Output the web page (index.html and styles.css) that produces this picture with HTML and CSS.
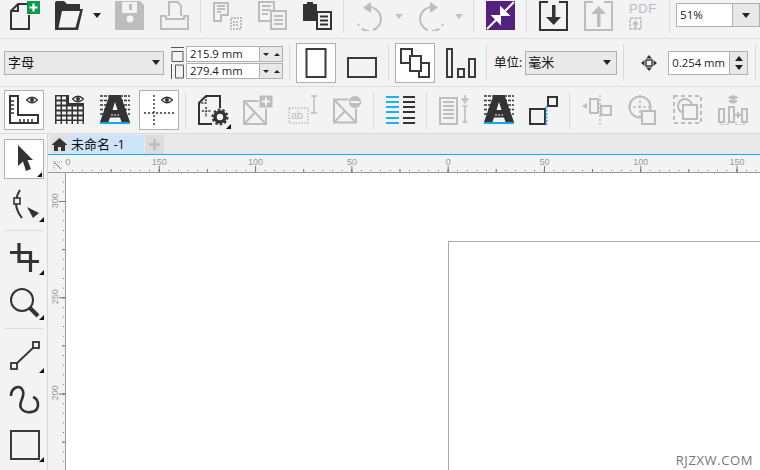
FILE: index.html
```html
<!DOCTYPE html>
<html lang="zh">
<head>
<meta charset="utf-8">
<title>未命名 -1</title>
<link rel="stylesheet" href="styles.css">
</head>
<body>
<svg class="defs" width="0" height="0">
  <symbol id="eye" viewBox="0 0 12 8"><path d="M.5 4Q6-1.500 11.500 4Q6 9.500 .5 4Z" fill="#fff" stroke="currentColor" stroke-width="1.200"/><circle cx="6" cy="4" r="2" fill="currentColor"/></symbol>
  <symbol id="bigA" viewBox="0 0 30 30">
    <path d="M0 1H30M0 5.500H30M0 10H30M0 14.500H30M0 19H30" stroke="currentColor" stroke-width="1.500" stroke-dasharray="3 1"/>
    <path d="M9.500 0H20.500L30 27H21.500L20 22.500H10L8.500 27H0Z" fill="currentColor"/>
    <path d="M12.500 15H17.500L15 7Z" fill="#f3f3f3"/>
    <path d="M11 20H13M14 20H16M17 20H19" stroke="#f3f3f3" stroke-width="1.200"/>
    <rect y="27" width="30" height="2" fill="#17a5e6"/>
  </symbol>
  <symbol id="imgbox" viewBox="0 0 24 25"><path d="M1 1H23V24H1ZM1 1L23 24M1 24L12 12.500" fill="none" stroke="currentColor" stroke-width="2"/></symbol>
</svg>

<header class="bars">
  <div class="row r1">
    <svg class="ic first" viewBox="0 0 30 30"><path d="M17 3H8L1 10V28H19V14M8 3V10H1" fill="none" stroke="#333" stroke-width="2"/><rect x="17" width="13" height="13" fill="#0c9b4c"/><path d="M23.500 2.500V10.500M19.500 6.500H27.500" stroke="#fff" stroke-width="2.200"/></svg>
    <svg class="ic" viewBox="0 0 30 30"><path d="M0 2Q0 0 2 0H9L12 3H25V8H28L23 29H0Z" fill="#333"/><path d="M7 10H25L20.500 26.500H3.500Z" fill="#f3f3f3"/></svg>
    <i class="drop dark m8"></i>
    <svg class="ic off m14" viewBox="0 0 30 30"><path d="M0 0H25L29 4V29H0Z" fill="currentColor"/><rect x="7" y="1" width="15" height="11" fill="#f3f3f3"/><rect x="14" y="3" width="3" height="6" fill="currentColor"/><circle cx="15" cy="18" r="3.500" fill="#f3f3f3"/></svg>
    <svg class="ic off" viewBox="0 0 30 30"><path d="M9 15V1H18L21 5V15M1 15H6V18H24V15H28V28H1Z" fill="none" stroke="currentColor" stroke-width="2"/></svg>
    <span class="sep"></span>
    <svg class="ic off" viewBox="0 0 30 30"><path d="M1 2H15V14H8V20H1ZM4 5H12M4 8H12M4 11H8" fill="none" stroke="currentColor" stroke-width="2"/><path d="M18 17H28V28H18ZM20 21H26M20 24H26" fill="none" stroke="currentColor" stroke-width="2" stroke-dasharray="2 1"/></svg>
    <svg class="ic off" viewBox="0 0 30 30"><path d="M1 1H16V20H1ZM4 5H13M4 9H13M4 13H10" fill="none" stroke="currentColor" stroke-width="2"/><path d="M13 10H28V28H13ZM16 15H25M16 19H25M16 23H25" fill="#f3f3f3" stroke="currentColor" stroke-width="2"/></svg>
    <svg class="ic" viewBox="0 0 30 30"><path d="M0 3H4V1H10V3H14V20H0Z" fill="#333"/><path d="M14 11H28V28H14Z" fill="#f3f3f3" stroke="#333" stroke-width="2"/><path d="M17 15.500H25M17 19.500H25M17 23.500H25" stroke="#333" stroke-width="2"/></svg>
    <span class="sep"></span>
    <svg class="ic off" viewBox="0 0 30 30"><path d="M12 6A12 12 0 1 1 2 23" fill="none" stroke="currentColor" stroke-width="2" stroke-dasharray="34 4 8 4 4 3"/><path d="M15 1L7 6.500L15 12Z" fill="currentColor"/></svg>
    <i class="drop pale m9"></i>
    <svg class="ic off m14" viewBox="0 0 30 30"><path d="M16 6A12 12 0 1 0 26 23" fill="none" stroke="currentColor" stroke-width="2" stroke-dasharray="34 4 8 4 4 3"/><path d="M13 1L21 6.500L13 12Z" fill="currentColor"/></svg>
    <i class="drop pale m8"></i>
    <span class="sep"></span>
    <svg class="ic" viewBox="0 0 30 30"><rect width="29" height="29" fill="#54227e"/><path d="M28 1L18 11M15 14H22L15 7ZM1 28L11 18M14 15H7L14 22Z" stroke="#fff" stroke-width="2" fill="#fff"/></svg>
    <span class="sep"></span>
    <svg class="ic" viewBox="0 0 30 30"><path d="M9 1H1V29H28V1H20" fill="none" stroke="#333" stroke-width="2"/><path d="M13 4H16.500V16H22L14.700 24L7 16H13Z" fill="#333"/></svg>
    <svg class="ic off" viewBox="0 0 30 30"><path d="M9 1H1V29H28V1H20" fill="none" stroke="currentColor" stroke-width="2"/><path d="M13 26H16.500V13H22L14.700 5L7 13H13Z" fill="currentColor"/></svg>
    <div class="ic pdf off"><span class="pdf-t">PDF</span><svg class="pdf-i" viewBox="0 0 12 12"><path d="M1 1H11V11H1Z" fill="none" stroke="currentColor" stroke-width="1.500" stroke-dasharray="3 1"/><path d="M5 10V7H3L6 3L9 7H7V10Z" fill="currentColor"/></svg></div>
    <span class="sep"></span>
    <div class="combo zoom"><span class="val">51%</span><span class="cbtn"><i class="drop dark"></i></span></div>
  </div>

  <div class="row r2">
    <div class="select font"><span>字母</span><i class="drop dark"></i></div>
    <div class="dims">
      <svg class="dim-i" viewBox="0 0 13 15"><path d="M0 .5H13M1 4.500H12V14.500H1Z" fill="none" stroke="#555"/></svg>
      <svg class="dim-i" viewBox="0 0 13 15"><path d="M.5 0V15M4.500 1H12.500V14H4.500Z" fill="none" stroke="#555"/></svg>
    </div>
    <div class="fields">
      <div class="field"><span class="num">215.9 mm</span><span class="spin"><i class="drop tiny"></i><i class="up tiny"></i></span></div>
      <div class="field"><span class="num">279.4 mm</span><span class="spin"><i class="drop tiny"></i><i class="up tiny"></i></span></div>
    </div>
    <span class="sep s6"></span>
    <div class="on m6"><svg class="ic0" viewBox="0 0 30 30"><path d="M5.500 1H24.500V29H5.500Z" fill="none" stroke="#3a3a3a" stroke-width="2"/></svg></div>
    <svg class="ic m11" viewBox="0 0 30 30"><path d="M1 10H29V29H1Z" fill="none" stroke="#3a3a3a" stroke-width="2"/></svg>
    <span class="sep m11"></span>
    <div class="on m6"><svg class="ic0" viewBox="0 0 30 30"><path d="M1 1H12V15H1ZM19 15H29V29H19Z" fill="none" stroke="#3a3a3a" stroke-width="2"/><path d="M10 8H21V23H10Z" fill="#fff" stroke="#3a3a3a" stroke-width="2"/></svg></div>
    <svg class="ic m11" viewBox="0 0 30 30"><path d="M1 1H6V29H1ZM12 21H18V29H12ZM23 11H29V29H23Z" fill="none" stroke="#3a3a3a" stroke-width="2"/></svg>
    <span class="sep m10"></span>
    <span class="label">单位:</span>
    <div class="select unit"><span>毫米</span><i class="drop dark"></i></div>
    <span class="sep s6"></span>
    <svg class="nudge" viewBox="0 0 16 16"><path d="M8 0L11 3.500H5ZM8 16L11 12.500H5ZM0 8L3.500 5V11ZM16 8L12.500 5V11Z" fill="#333"/><rect x="5" y="5" width="6" height="6" fill="none" stroke="#333" stroke-width="1.400"/></svg>
    <div class="combo outline"><span class="val">0.254 mm</span><span class="vspin"><i class="up"></i><i class="drop dark"></i></span></div>
    <span class="sep s7"></span>
  </div>

  <div class="row r3">
    <div class="on m4"><svg class="ic0 dk" viewBox="0 0 30 30"><path d="M1 1H9V20H29V28H1Z" fill="none" stroke="currentColor" stroke-width="2"/><path d="M1 6H5M1 10H5M1 14H5M1 18H5M11 28V24M15 28V24M19 28V24M23 28V24" stroke="currentColor" stroke-width="1.500"/><use href="#eye" x="17" y="1" width="12" height="8"/></svg></div>
    <svg class="ic dk m11" viewBox="0 0 30 30"><path d="M0 0H14V8H29V29H0Z" fill="currentColor"/><path d="M1.500 3H12.500M1.500 8H12.500" stroke="#f3f3f3" stroke-width="3" stroke-dasharray="4 1.500"/><path d="M1.500 13H28M1.500 18H28M1.500 23H28M1.500 27.500H28" stroke="#f3f3f3" stroke-width="3" stroke-dasharray="4 1.500"/><use href="#eye" x="17" y="0" width="12" height="8"/></svg>
    <svg class="ic dk" viewBox="0 0 30 30"><use href="#bigA" width="30" height="30"/></svg>
    <div class="on m9"><svg class="ic0 dk" viewBox="0 0 30 30"><path d="M10 0V30M0 18H30" stroke="currentColor" stroke-width="1.400" stroke-dasharray="2 2"/><use href="#eye" x="17" y="1" width="12" height="8"/></svg></div>
    <span class="sep s6"></span>
    <div class="ic fly"><svg class="ic0 dk" viewBox="0 0 30 30"><path d="M22 13V1H8L1 8V29H14" fill="none" stroke="currentColor" stroke-width="2"/><path d="M8 1V8H1M8 12V22M4 16H13" stroke="currentColor" stroke-width="1.500" stroke-dasharray="2 1.200" fill="none"/><circle cx="22" cy="22" r="5" fill="none" stroke="currentColor" stroke-width="3.600"/><circle cx="22" cy="22" r="7.500" fill="none" stroke="currentColor" stroke-width="2" stroke-dasharray="2.500 2.200"/></svg></div>
    <svg class="ic off" viewBox="0 0 30 30"><use href="#imgbox" y="5" width="24" height="25"/><rect x="16" width="14" height="13" fill="currentColor" stroke="#f3f3f3"/><path d="M23 2.500V10.500M19 6.500H27" stroke="#f3f3f3" stroke-width="2"/></svg>
    <svg class="ic off" viewBox="0 0 30 30"><path d="M1 13H20V28H1Z" fill="none" stroke="currentColor" stroke-width="1.500" stroke-dasharray="1.500 1.500"/><text class="ab" x="3" y="24">ab</text><path d="M23 1H29M26 1V18M23 18H29" fill="none" stroke="currentColor" stroke-width="1.500"/></svg>
    <svg class="ic off" viewBox="0 0 30 30"><use href="#imgbox" y="3" width="24" height="26"/><circle cx="22" cy="7" r="6.500" fill="currentColor" stroke="#f3f3f3"/><path d="M17.500 7H26.500" stroke="#f3f3f3" stroke-width="2"/></svg>
    <span class="sep"></span>
    <svg class="ic" viewBox="0 0 30 30"><path d="M0 2H13M0 7H13M0 12H13M0 17H13M0 23H13M0 28H13" stroke="#1fb0f2" stroke-width="2"/><path d="M17 2H29M17 7H29M17 12H29M17 17H29M17 23H29M17 28H29" stroke="#333" stroke-width="2"/></svg>
    <span class="sep"></span>
    <svg class="ic off" viewBox="0 0 30 30"><path d="M1 3H18V29H1ZM4 7H15M4 11H15M4 15H15M4 19H15M4 23H15" fill="none" stroke="currentColor" stroke-width="2"/><path d="M26 0V5M23.500 4H28.500L26 7.500ZM23.500 11H28.500M26 11V27M23.500 27H28.500" fill="none" stroke="currentColor" stroke-width="1.600"/></svg>
    <svg class="ic dk" viewBox="0 0 30 30"><use href="#bigA" width="30" height="30"/></svg>
    <svg class="ic" viewBox="0 0 30 30"><path d="M1 14H16V29H1ZM19 2H28V11H19Z" fill="none" stroke="#333" stroke-width="2"/><path d="M17.500 11V30" stroke="#1fb0f2" stroke-width="2" stroke-dasharray="2 1.500"/></svg>
    <span class="sep"></span>
    <svg class="ic off" viewBox="0 0 30 30"><path d="M8 4H16V18H8ZM19 11H29V20H19Z" fill="none" stroke="currentColor" stroke-width="2"/><path d="M18 0V30" stroke="currentColor" stroke-width="1.500" stroke-dasharray="2 2"/><path d="M0 11L5 8V14Z" fill="currentColor"/></svg>
    <svg class="ic off m16" viewBox="0 0 30 30"><circle cx="12" cy="12" r="10.500" fill="none" stroke="currentColor" stroke-width="2"/><path d="M12 0V24M0 12H24" stroke="currentColor" stroke-width="1.500" stroke-dasharray="3 2"/><path d="M14 16H27V29H14Z" fill="#f3f3f3" stroke="currentColor" stroke-width="2"/></svg>
    <svg class="ic off" viewBox="0 0 30 30"><path d="M1 1H28V28H1Z" fill="none" stroke="currentColor" stroke-width="2" stroke-dasharray="4 3"/><circle cx="12" cy="11" r="7" fill="none" stroke="currentColor" stroke-width="2"/><path d="M10 10H24V24H10Z" fill="#f3f3f3" stroke="currentColor" stroke-width="2"/></svg>
    <svg class="ic off" viewBox="0 0 30 30"><path d="M1 14H6V27H1ZM11 12H16V27H11ZM24 14H29V27H24ZM16 20H24M20 17V23" fill="none" stroke="currentColor" stroke-width="2"/><path d="M3 27V30H10V27M18 27V30H26V27" fill="none" stroke="currentColor" stroke-width="1"/><path d="M15 0L21 2.500L15 5L9 2.500ZM11 5H19V7Q15 10 11 7Z" fill="currentColor"/></svg>
  </div>
</header>

<main class="work">
  <aside class="tools">
    <div class="on tool-sel fly"><svg class="ic0" viewBox="0 0 30 30"><path d="M9 1V22L14 17.500L17 27L22 25L18.500 16H24Z" fill="#333"/></svg></div>
    <div class="tool fly t-shape"><svg class="ic0" viewBox="0 0 30 30"><path d="M10 0Q1 14 12 28" fill="none" stroke="#333" stroke-width="2"/><rect x="4" y="8" width="6" height="6" fill="#f3f3f3" stroke="#333" stroke-width="1.600"/><path d="M17 17L29 23L23 28Z" fill="#333"/></svg></div>
    <span class="hsep"></span>
    <div class="tool fly"><svg class="ic0" viewBox="0 0 30 30"><path d="M9 0V18.500H29M0 9.500H20.500V29" fill="none" stroke="#333" stroke-width="3.200"/></svg></div>
    <div class="tool fly"><svg class="ic0" viewBox="0 0 30 30"><circle cx="12" cy="12" r="11" fill="none" stroke="#333" stroke-width="2"/><path d="M20 20L28 28" stroke="#333" stroke-width="4"/></svg></div>
    <span class="hsep wide"></span>
    <div class="tool fly"><svg class="ic0" viewBox="0 0 30 30"><path d="M5 24L25 5" stroke="#333" stroke-width="1.800"/><rect x="1" y="22" width="6" height="6" fill="#f3f3f3" stroke="#333" stroke-width="1.800"/><rect x="23" y="1" width="6" height="6" fill="#f3f3f3" stroke="#333" stroke-width="1.800"/></svg></div>
    <div class="tool t-curve"><svg class="ic0" viewBox="0 0 30 30"><path d="M1 11C1 3 10 -2 13 6C15 13 8 17 11 23C14 29 28 29 28 20C28 16 26 13 23 12" fill="none" stroke="#333" stroke-width="2.600"/></svg></div>
    <div class="tool fly"><svg class="ic0" viewBox="0 0 30 30"><path d="M1 1H29V29H1Z" fill="none" stroke="#3a3a3a" stroke-width="2"/></svg></div>
  </aside>

  <section class="doc">
    <nav class="tabs">
      <span class="home"><svg viewBox="0 0 15 13" width="15" height="13"><path d="M7.500 0L15 6.500V7H13V13H9V9H6V13H2V7H0V6.500Z" fill="#333"/></svg></span>
      <span class="tab">未命名 -1</span>
      <span class="add"><svg viewBox="0 0 11 11" width="11" height="11"><path d="M5.500 0V11M0 5.500H11" stroke="#bcbcbc" stroke-width="2.400"/></svg></span>
    </nav>
    <div class="hrow">
      <div class="corner"><svg viewBox="0 0 9 9" width="9" height="9"><path d="M1 0V9M0 1H9" stroke="#999" stroke-dasharray="1 1"/><path d="M2 2L8 8" stroke="#777"/></svg></div>
      <div class="hruler"><span class="clip">200</span><span>150</span><span>100</span><span>50</span><span>0</span><span>50</span><span>100</span><span>150</span></div>
    </div>
    <div class="vrow">
      <div class="vruler"><span>300</span><span>250</span><span>200</span></div>
      <div class="canvas"><div class="page"></div></div>
    </div>
  </section>
</main>
<div class="mark">RJZXW.COM</div>
</body>
</html>
```
FILE: styles.css
```css
* { box-sizing: border-box; }
html, body { margin: 0; height: 470px; overflow: hidden; }
body {
  position: relative;
  width: 760px;
  background: #f3f3f3;
  color: #222;
  font: 11.3px "Open Sans", "Noto Sans CJK SC", sans-serif;
}
.defs { position: absolute; }
i { display: block; }

.row { display: flex; align-items: center; border-bottom: 1px solid #dcdcdc; }
.r1 { height: 39px; align-items: flex-start; padding-top: 1px; }
.r2 { height: 48px; }
.r3 { height: 47px; }

.ic { display: block; flex: none; width: 30px; height: 30px; margin-left: 15px; }
.ic0 { display: block; width: 30px; height: 30px; overflow: visible; flex: none; }
.ic.first { margin-left: 10px; }
.off { color: #bdbdbd; }
.dk { color: #333; }
.sep { flex: none; width: 1px; height: 37px; margin-left: 10px; background: #dadada; }
.sep + .ic { margin-left: 12px; }
.r1 .sep { height: 33px; margin-top: -1px; }
.m4 { margin-left: 4px !important; }
.m6 { margin-left: 6px !important; }
.m8 { margin-left: 8px !important; }
.m9 { margin-left: 9px !important; }
.m10 { margin-left: 10px !important; }
.m11 { margin-left: 11px !important; }
.m14 { margin-left: 14px !important; }
.m16 { margin-left: 16px !important; }
.s6 { margin-left: 6px; }
.s7 { margin-left: 7px; }

.drop { flex: none; width: 0; height: 0; border: 4px solid transparent; border-bottom: 0; border-top: 5px solid #222; }
.r1 > .drop { margin-top: 12px; }
.drop.pale { border-top-color: #c4c4c4; margin-top: 13px; }
.drop.tiny { border-width: 3px 3.500px 0; border-top-color: #222; }
.up { width: 0; height: 0; border: 4px solid transparent; border-top: 0; border-bottom: 5px solid #222; }
.up.tiny { border-width: 0 3.500px 3px; border-bottom-color: #222; }

.pdf { display: flex; flex-direction: column; margin-left: 15px; }
.pdf-t { font: 13px/14px "Liberation Sans", sans-serif; letter-spacing: .6px; margin-top: 1px; color: #bdbdbd; }
.pdf-i { width: 13px; height: 13px; margin-top: 1px; }

.combo { display: flex; background: #fff; border: 1px solid #b0b0b0; }
.combo .val { flex: 1; }
.zoom { width: 84px; height: 24px; margin-left: 6px; margin-top: 2px; margin-right: -1px; }
.zoom .val { padding: 1px 3px; font-size: 11.6px; line-height: 19px; }
.cbtn { width: 27px; background: #e8e8e8; border-left: 1px solid #b0b0b0; display: flex; align-items: center; justify-content: center; }

.select {
  flex: none; display: flex; align-items: center; justify-content: space-between;
  height: 24px; padding: 0 3px 2px; background: #e9e9e9; border: 1px solid #b0b0b0;
  font-size: 13px; color: #111;
}
.select .drop { margin-top: 2px; }
.font { width: 160px; margin-left: 4px; }
.unit { width: 92px; margin-left: 3px; padding-left: 2px; padding-right: 5px; }
.dims { width: 13px; margin-left: 7px; display: flex; flex-direction: column; gap: 2px; }
.dim-i { display: block; width: 13px; height: 15px; }
.fields { margin-left: 2px; display: flex; flex-direction: column; gap: 1px; }
.field { display: flex; width: 97px; height: 16px; background: #fff; border: 1px solid #b0b0b0; }
.num { flex: none; width: 72px; padding-left: 3px; line-height: 14px; }
.spin { flex: 1; background: #e8e8e8; border-left: 1px solid #b0b0b0; display: flex; align-items: center; justify-content: space-around; }
.on {
  flex: none; width: 40px; height: 40px; padding: 4px; background: #fff; border: 1px solid #b0b0b0;
  display: flex; align-items: center; justify-content: center;
}
.label { margin-left: 7px; margin-bottom: 2px; font-size: 12.5px; color: #111; white-space: nowrap; }
.nudge { flex: none; width: 16px; height: 16px; margin-left: 17px; }
.outline { flex: none; width: 80px; height: 24px; margin-left: 11px; }
.outline .val { padding-left: 3px; line-height: 22px; }
.vspin { width: 18px; background: #e8e8e8; border-left: 1px solid #b0b0b0; display: flex; flex-direction: column; align-items: center; justify-content: space-evenly; }

.ab { font: 11px "Liberation Sans", sans-serif; fill: #bdbdbd; }

.fly { position: relative; }
.fly::after {
  content: ""; position: absolute; right: 0; bottom: 0; width: 5px; height: 5px;
  background: #111; clip-path: polygon(100% 0, 100% 100%, 0 100%);
}
.r3 .fly::after { right: -3px; bottom: -4px; }

.work { display: flex; height: 336px; }
.tools { flex: none; width: 47px; padding-left: 4px; display: flex; flex-direction: column; align-items: flex-start; }
.tool-sel { margin-top: 5px; }
.tool-sel::after { right: 1px; bottom: 1px; }
.tool { position: relative; width: 30px; height: 30px; margin: 15px 0 0 6px; flex: none; }
.tool::after { right: -4px; bottom: -2px; }
.t-shape { height: 32px; margin-top: 11px; }
.t-shape::after { bottom: 0; }
.t-curve { margin-top: 14px; }
.hsep { flex: none; width: 38px; height: 1px; margin-left: 1px; background: #dadada; margin-top: 8px; }
.hsep.wide { margin-top: 10px; }
.hsep + .tool { margin-top: 12px; }

.doc { flex: 1; min-width: 0; border-left: 1px solid #d8d8d8; display: flex; flex-direction: column; overflow: hidden; }
.tabs { flex: none; height: 21px; display: flex; align-items: stretch; background: #e9e9e9; padding-top: 1px; padding-left: 3px; border-bottom: 1px solid #14b0f5; }
.home { width: 17px; background: #e0e0e0; display: flex; align-items: center; justify-content: center; }
.tab { width: 76px; background: #cde4fb; padding-left: 3px; font-size: 13px; line-height: 18px; color: #111; }
.add { width: 19px; margin-left: 1px; background: #dcdcdc; display: flex; align-items: center; justify-content: center; }

.hrow { flex: none; height: 18px; display: flex; }
.corner { flex: none; width: 17px; padding: 3px 0 0 5px; border-bottom: 1px solid #999; }
.hruler {
  flex: 1; display: flex; overflow: hidden;
  border-bottom: 1px solid #999;
  background-image:
    linear-gradient(90deg, #777 1px, transparent 1px),
    linear-gradient(90deg, #777 1px, transparent 1px),
    linear-gradient(90deg, #777 1px, transparent 1px);
  background-repeat: repeat-x;
  background-size: 96.3px 6px, 48.150px 3px, 9.630px 1px;
  background-position: -2.500px 11px, -2.500px 14px, -2.500px 15px;
}
.hruler span {
  flex: none; width: 96.3px; text-align: center;
  font: 9px/11px "Liberation Sans", sans-serif; color: #999; padding-top: 2px;
}
.hruler .clip { margin-left: -50.150px; }

.vrow { flex: 1; display: flex; min-height: 0; }
.vruler {
  flex: none; width: 18px; display: flex; flex-direction: column; overflow: hidden;
  border-right: 1px solid #999;
  background-image:
    linear-gradient(#777 1px, transparent 1px),
    linear-gradient(#777 1px, transparent 1px),
    linear-gradient(#777 1px, transparent 1px);
  background-repeat: repeat-y;
  background-size: 6px 96.3px, 3px 48.150px, 1px 9.630px;
  background-position: 11px 28px, 14px 28px, 15px 28px;
}
.vruler span {
  flex: none; height: 96.3px; width: 12px; margin-left: 1px; text-align: center;
  writing-mode: vertical-rl; transform: rotate(180deg);
  font: 9px/12px "Liberation Sans", sans-serif; color: #999;
}
.vruler span:first-child { margin-top: -20.150px; }
.canvas { flex: 1; background: #fff; overflow: hidden; padding: 68px 0 0 382px; }
.page { width: 400px; height: 400px; border: 1px solid #aaa; }

.mark {
  position: absolute; right: 7px; bottom: 3px;
  font: 13px/14px "Open Sans", sans-serif; letter-spacing: .6px; color: #777;
}
```
